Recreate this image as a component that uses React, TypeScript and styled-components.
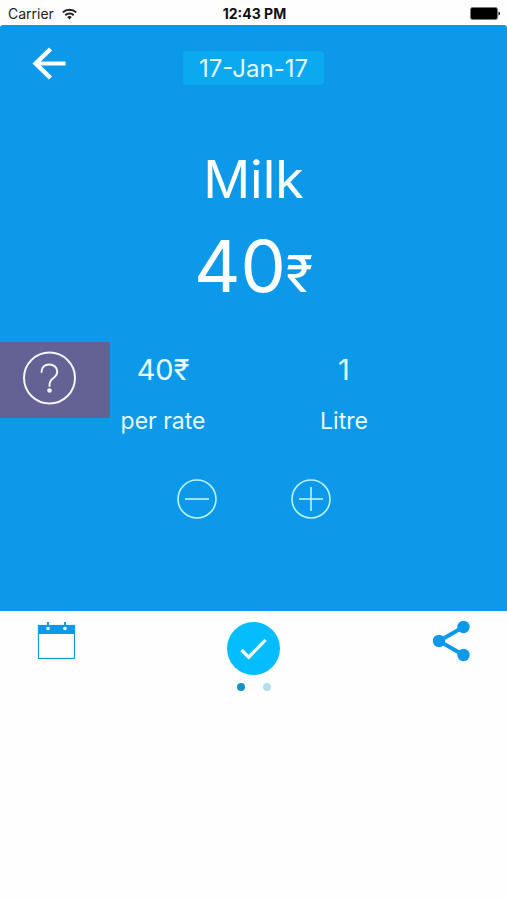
import React, { useState } from "react";
import styled, { createGlobalStyle } from "styled-components";

const GlobalStyle = createGlobalStyle`
  * { box-sizing: border-box; }
  body {
    margin: 0;
    background: #fff;
    font-family: Inter, "Liberation Sans", sans-serif;
  }
`;

const Screen = styled.main`
  display: flex;
  flex-direction: column;
  min-height: 100vh;
  background: #fefefe;
`;

const StatusBar = styled.div`
  display: grid;
  grid-template-columns: 1fr auto 1fr;
  align-items: center;
  padding: 2px 6px 0 8px;
  height: 25px;
  font-size: 14px;
  color: #222;
`;

const Carrier = styled.span`
  display: flex;
  align-items: center;
  gap: 8px;
`;

const Clock = styled.time`
  font-weight: 700;
  color: #111;
`;

const BatterySlot = styled.span`
  display: flex;
  justify-content: flex-end;
`;

const Panel = styled.section`
  display: flex;
  flex-direction: column;
  padding-bottom: 92px;
  background: #0c99ea;
  border-radius: 3px 3px 0 0;
  color: #fff;
`;

const Header = styled.header`
  display: grid;
  grid-template-columns: 1fr auto 1fr;
  align-items: start;
  padding: 22px 32px 0;
`;

const IconButton = styled.button`
  display: flex;
  justify-self: start;
  padding: 0;
  border: 0;
  border-radius: 50%;
  background: none;
  color: inherit;
  cursor: pointer;
`;

const DatePill = styled.button`
  height: 34px;
  margin-top: 4px;
  padding: 2px 16px 0;
  border: 0;
  border-radius: 4px;
  background: #0ba9ef;
  color: #e6fbff;
  font: inherit;
  font-size: 24px;
  line-height: 32px;
  cursor: pointer;
`;

const Product = styled.h1`
  margin: 63px 0 0;
  font-size: 52px;
  font-weight: 400;
  line-height: 64px;
  text-align: center;
`;

const Total = styled.p`
  margin: 14px 0 0;
  font-size: 72px;
  line-height: 80px;
  text-align: center;
`;

const Currency = styled.span`
  font-size: 50px;
  line-height: 50px;
`;

const Details = styled.div`
  display: grid;
  grid-template-columns: 110px 1fr 110px;
  align-items: start;
  margin-top: 36px;
`;

const HelpButton = styled.button`
  display: flex;
  align-items: center;
  height: 76px;
  padding: 0 0 4px 22px;
  border: 0;
  background: #646295;
  color: #f4f3ff;
  cursor: pointer;
`;

const Stats = styled.dl`
  display: flex;
  justify-content: space-between;
  margin: 0;
  padding-top: 10px;
`;

const Stat = styled.div`
  display: flex;
  flex-direction: column-reverse;
  gap: 19px;
  width: 106px;
  text-align: center;
  color: #e6fbff;
`;

const StatValue = styled.dd`
  margin: 0;
  font-size: 29px;
  line-height: 36px;
`;

const StatLabel = styled.dt`
  font-size: 23px;
  line-height: 28px;
  white-space: nowrap;
`;

const Stepper = styled.div`
  display: flex;
  justify-content: center;
  gap: 74px;
  margin-top: 44px;
  color: #b8f4ff;
`;

const Footer = styled.footer`
  display: grid;
  grid-template-columns: 1fr auto 1fr;
  align-items: start;
  padding: 9px 36px 0;
  color: #0c99ea;
`;

const Confirm = styled.div`
  display: flex;
  flex-direction: column;
  align-items: center;
  gap: 8px;
  padding-top: 2px;
`;

const ShareButton = styled(IconButton)`
  justify-self: end;
`;

const CalendarButton = styled(IconButton)`
  margin-top: 2px;
  border-radius: 0;
`;

const Dots = styled.div`
  display: flex;
  gap: 18px;
`;

const Dot = styled.button<{ $active: boolean }>`
  width: 8px;
  height: 8px;
  padding: 0;
  border: 0;
  border-radius: 50%;
  background: ${(p) => (p.$active ? "#1594c4" : "#b5dfea")};
  cursor: pointer;
`;

const WifiIcon = () => (
  <svg width="15" height="12" viewBox="0 0 15 12" fill="none" stroke="#222" strokeWidth="2" aria-hidden="true">
    <path d="M.8 4.4a9.6 9.6 0 0 1 13.4 0" />
    <path d="M3.3 7.2a6 6 0 0 1 8.4 0" />
    <path d="M7.5 11.4 5.2 9.1a3.3 3.3 0 0 1 4.6 0z" fill="#222" stroke="none" />
  </svg>
);

const BatteryIcon = () => (
  <svg width="31" height="13" viewBox="0 0 31 13" role="img" aria-label="Battery full">
    <rect x=".5" y=".5" width="27" height="12" rx="2" stroke="#777" fill="#000" />
    <path d="M28.5 4.5c2 .5 2 3.5 0 4z" fill="#111" />
  </svg>
);

const BackIcon = () => (
  <svg width="34" height="34" viewBox="0 0 34 34" fill="none" stroke="currentColor" strokeWidth="4" aria-hidden="true">
    <path d="M33.500 16.500H4" />
    <path d="M18.500 2 3.700 16.500 18.500 31" strokeWidth="4.500" />
  </svg>
);

const HelpIcon = () => (
  <svg width="54" height="54" viewBox="0 0 54 54" fill="none" stroke="currentColor" strokeWidth="2" aria-hidden="true">
    <circle cx="27.500" cy="27" r="25.500" />
    <path d="M19.500 21c0-4.500 3.200-7.500 7.800-7.500s7.900 2.900 7.900 7c0 3-1.500 4.800-4 6.700-2.700 2-3.700 3.500-3.700 6.800v1" strokeLinecap="round" />
    <circle cx="27.500" cy="39.500" r="2.300" fill="currentColor" stroke="none" />
  </svg>
);

const StepIcon = ({ plus }: { plus?: boolean }) => (
  <svg width="40" height="40" viewBox="0 0 40 40" fill="none" stroke="currentColor" strokeWidth="1.600" aria-hidden="true">
    <circle cx="20" cy="20" r="19" />
    <path d="M8 20h24" />
    {plus && <path d="M20 8v24" />}
  </svg>
);

const CalendarIcon = () => (
  <svg width="40" height="39" viewBox="0 0 40 39" fill="none" stroke="currentColor" aria-hidden="true">
    <rect x="2.500" y="3.500" width="36" height="33" strokeWidth="1.200" />
    <path d="M2 3h37v9H2z" fill="currentColor" stroke="none" />
    <path d="M12 0v5M29 0v5" strokeWidth="2" />
    <circle cx="12" cy="6.500" r="1.800" fill="#e6fbff" stroke="none" />
    <circle cx="29" cy="6.500" r="1.800" fill="#e6fbff" stroke="none" />
  </svg>
);

const CheckIcon = () => (
  <svg width="53" height="53" viewBox="0 0 53 53" fill="none" aria-hidden="true">
    <circle cx="26.500" cy="26.500" r="26.500" fill="#03bdff" />
    <path d="m14.500 28 7.200 7.200L38.500 18" stroke="#fff" strokeWidth="3.200" />
  </svg>
);

const ShareIcon = () => (
  <svg width="39" height="42" viewBox="0 0 39 42" fill="currentColor" aria-hidden="true">
    <path d="M31.500 7 7 21l24.500 14" fill="none" stroke="currentColor" strokeWidth="4" />
    <circle cx="31.500" cy="7" r="6.200" />
    <circle cx="7" cy="21" r="6.200" />
    <circle cx="31.500" cy="35" r="6.200" />
  </svg>
);

const RATE = 40;

export default function App() {
  const [litres, setLitres] = useState(1);
  const [page, setPage] = useState(0);

  return (
    <>
      <GlobalStyle />
      <Screen>
        <StatusBar>
          <Carrier>
            Carrier
            <WifiIcon />
          </Carrier>
          <Clock>12:43 PM</Clock>
          <BatterySlot>
            <BatteryIcon />
          </BatterySlot>
        </StatusBar>

        <Panel>
          <Header>
            <IconButton type="button" aria-label="Back">
              <BackIcon />
            </IconButton>
            <DatePill type="button">17-Jan-17</DatePill>
          </Header>
          <Product>Milk</Product>
          <Total>
            {RATE * litres}
            <Currency>₹</Currency>
          </Total>
          <Details>
            <HelpButton type="button" aria-label="Help">
              <HelpIcon />
            </HelpButton>
            <Stats>
              <Stat>
                <StatLabel>per rate</StatLabel>
                <StatValue>{RATE}₹</StatValue>
              </Stat>
              <Stat>
                <StatLabel>Litre</StatLabel>
                <StatValue>{litres}</StatValue>
              </Stat>
            </Stats>
          </Details>
          <Stepper>
            <IconButton type="button" aria-label="Decrease" onClick={() => setLitres(Math.max(0, litres - 1))}>
              <StepIcon />
            </IconButton>
            <IconButton type="button" aria-label="Increase" onClick={() => setLitres(litres + 1)}>
              <StepIcon plus />
            </IconButton>
          </Stepper>
        </Panel>

        <Footer>
          <CalendarButton type="button" aria-label="Calendar">
            <CalendarIcon />
          </CalendarButton>
          <Confirm>
            <IconButton type="button" aria-label="Confirm">
              <CheckIcon />
            </IconButton>
            <Dots>
              {[0, 1].map((i) => (
                <Dot key={i} type="button" $active={i === page} aria-label={`Page ${i + 1}`} onClick={() => setPage(i)} />
              ))}
            </Dots>
          </Confirm>
          <ShareButton type="button" aria-label="Share">
            <ShareIcon />
          </ShareButton>
        </Footer>
      </Screen>
    </>
  );
}
